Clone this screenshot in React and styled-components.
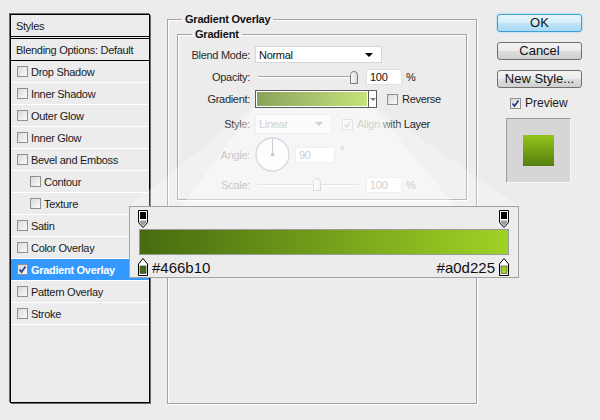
import styled, { createGlobalStyle } from "styled-components";

const GlobalStyle = createGlobalStyle`
  body {
    margin: 0;
    background: #ececec;
    font-family: "Liberation Sans", Arial, sans-serif;
  }
`;

const Page = styled.div`
  position: relative;
  width: 600px;
  height: 420px;
  box-sizing: border-box;
  padding: 12px 0 0 10px;
  display: flex;
  align-items: flex-start;
  overflow: hidden;
  font-size: 11px;
  letter-spacing: -0.3px;
  color: #1a1a1a;
`;

/* ---------- left list ---------- */

const StylesPanel = styled.div`
  margin-top: 2px;
  width: 140px;
  height: 389px;
  box-sizing: border-box;
  border: 1px solid #000;
  box-shadow: -1px -1px 0 #6a6a6a, 1px 1px 0 #6a6a6a;
`;

const PanelHeader = styled.div`
  height: 21px;
  padding-left: 5px;
  display: flex;
  align-items: center;
  border-bottom: 3px double #000;
`;

const PanelRow = styled.div`
  height: 21px;
  display: flex;
  align-items: center;
  gap: 3px;
  padding-left: ${(p) => (p.$plain ? 5 : p.$indent ? 19 : 6)}px;
  border-bottom: 1px solid ${(p) => (p.$plain ? "#000" : "#fff")};
  background: ${(p) => (p.$active ? "#3399ff" : "transparent")};
  color: ${(p) => (p.$active ? "#fff" : "#1a1a1a")};
  font-weight: ${(p) => (p.$active ? "bold" : "normal")};
`;

const CheckBox = styled.span`
  width: 11px;
  height: 11px;
  box-sizing: border-box;
  flex-shrink: 0;
  border: 1px solid ${(p) => (p.$disabled ? "#c8c8c8" : "#8e8f8f")};
  background: ${(p) =>
    p.$disabled ? "#f4f4f4" : "linear-gradient(135deg, #d8d8d8, #fbfbfb)"};
  display: flex;
  align-items: center;
  justify-content: center;
`;

const Check = ({ checked, disabled }) => (
  <CheckBox $disabled={disabled}>
    {checked && (
      <svg width="9" height="9" viewBox="0 0 9 9">
        <path
          d="M1.5 4.5 L3.5 7 L7.5 1.5"
          fill="none"
          stroke={disabled ? "#b9c0d8" : "#2a3c8c"}
          strokeWidth="1.7"
        />
      </svg>
    )}
  </CheckBox>
);

/* ---------- middle group boxes ---------- */

const GroupBox = styled.fieldset`
  margin: ${(p) => p.$margin};
  padding: ${(p) => p.$padding};
  width: ${(p) => p.$w}px;
  height: ${(p) => p.$h}px;
  box-sizing: border-box;
  min-width: 0;
  border: 1px solid #a3a3a3;
  box-shadow: inset 1px 1px 0 #fff, 1px 1px 0 #fff;
`;

const Legend = styled.legend`
  margin-left: ${(p) => p.$offset}px;
  padding: 0 3px;
  font-weight: bold;
  line-height: 14px;
  letter-spacing: -0.2px;
  color: #111;
`;

const FormRow = styled.div`
  display: flex;
  align-items: center;
  height: ${(p) => p.$h}px;
  margin-top: ${(p) => p.$mt}px;
`;

const Label = styled.span`
  width: 72px;
  margin-right: 5px;
  flex-shrink: 0;
  text-align: right;
  color: ${(p) => (p.$disabled ? "#8c8c8c" : "#2a2a2a")};
`;

const Select = styled.div`
  width: ${(p) => p.$w}px;
  height: 100%;
  box-sizing: border-box;
  padding: 0 8px 0 3px;
  display: flex;
  align-items: center;
  justify-content: space-between;
  background: ${(p) => (p.$disabled ? "#f7f7f7" : "#fff")};
  border: 1px solid ${(p) => (p.$disabled ? "#e2e2e2" : "#d6d6d6")};
  color: ${(p) => (p.$disabled ? "#a0a0a0" : "#111")};
  &::after {
    content: "";
    border-left: 4px solid transparent;
    border-right: 4px solid transparent;
    border-top: 4px solid ${(p) => (p.$disabled ? "#a0a0a0" : "#000")};
  }
`;

const Field = styled.div`
  width: ${(p) => p.$w}px;
  height: ${(p) => p.$h}px;
  margin-left: ${(p) => p.$ml}px;
  box-sizing: border-box;
  padding-left: 3px;
  display: flex;
  align-items: center;
  background: #fff;
  border: 1px solid #e2e2e2;
  color: ${(p) => (p.$disabled ? "#959595" : "#111")};
`;

const Unit = styled.span`
  margin-left: ${(p) => p.$ml}px;
  align-self: ${(p) => (p.$top ? "flex-start" : "center")};
  margin-top: ${(p) => (p.$top ? 6 : 0)}px;
  color: ${(p) => (p.$disabled ? "#959595" : "#222")};
`;

const SliderBox = styled.div`
  width: 100px;
  margin-left: 3px;
  display: flex;
  align-items: center;
`;

const TrackLine = styled.div`
  flex: ${(p) => p.$grow};
  height: 1px;
  border-bottom: 1px solid #fff;
  background: ${(p) => (p.$disabled ? "#c4c4c4" : "#a5a5a5")};
`;

const Slider = ({ value, disabled }) => (
  <SliderBox>
    <TrackLine $grow={value} $disabled={disabled} />
    <svg width="8" height="13" viewBox="0 0 8 13">
      <defs>
        <linearGradient id={disabled ? "thd" : "th"} x1="0" x2="1">
          <stop offset="0" stopColor="#fff" />
          <stop offset="1" stopColor={disabled ? "#e8e8e8" : "#d6d6d6"} />
        </linearGradient>
      </defs>
      <path
        d="M0.5 3.5 Q0.5 0.5 4 0.5 Q7.5 0.5 7.5 3.5 V12.5 H0.5 Z"
        fill={`url(#${disabled ? "thd" : "th"})`}
        stroke={disabled ? "#b4b4b4" : "#7a7a7a"}
      />
    </svg>
    <TrackLine $grow={1 - value} $disabled={disabled} />
  </SliderBox>
);

const GradientPicker = styled.div`
  width: 122px;
  height: 18px;
  box-sizing: border-box;
  display: flex;
  border: 1px solid #5d5d5d;
  background: #fff;
`;

const GradientFill = styled.div`
  flex: 1;
  margin: 1px;
  background: linear-gradient(to right, #8aa35c, #c6e27a);
`;

const GradientDrop = styled.div`
  width: 7px;
  border-left: 1px solid #5d5d5d;
  display: flex;
  align-items: center;
  justify-content: center;
  &::after {
    content: "";
    border-left: 3px solid transparent;
    border-right: 3px solid transparent;
    border-top: 3px solid #7a7a7a;
  }
`;

const InlineText = styled.span`
  margin-left: ${(p) => p.$ml}px;
  display: flex;
  align-items: center;
  gap: 4px;
  color: #1f1f1f;
`;

const Faded = styled.span`
  color: #a0a0a0;
`;

/* ---------- right column ---------- */

const ButtonColumn = styled.div`
  margin: 2px 0 0 20px;
  width: 85px;
  display: flex;
  flex-direction: column;
  gap: 10px;
`;

const Button = styled.button`
  width: 85px;
  height: 18px;
  padding: 0;
  font-family: "Liberation Sans", Arial, sans-serif;
  font-size: 13px;
  line-height: 16px;
  letter-spacing: 0;
  color: #111;
  border-radius: 3px;
  border: 1px solid ${(p) => (p.$primary ? "#3c9fd8" : "#707070")};
  box-shadow: ${(p) => (p.$primary ? "0 0 2px #6cc8f4" : "none")};
  background: ${(p) =>
    p.$primary
      ? "linear-gradient(#e8f6fd, #d5eefb 50%, #bfe5f8 51%, #a9daf3)"
      : "linear-gradient(#f3f3f3, #ebebeb 50%, #dddddd 51%, #cfcfcf)"};
`;

const PreviewToggle = styled.label`
  margin: -2px 0 0 13px;
  display: flex;
  align-items: center;
  gap: 4px;
  font-size: 12px;
  letter-spacing: 0;
`;

const PreviewBox = styled.div`
  margin: -2px 0 0 9px;
  width: 65px;
  height: 65px;
  box-sizing: border-box;
  border: 1px solid;
  border-color: #9a9a9a #f8f8f8 #f8f8f8 #9a9a9a;
  background: #d6d6d6;
  display: flex;
  align-items: center;
  justify-content: center;
`;

const PreviewSwatch = styled.div`
  width: 31px;
  height: 31px;
  background: linear-gradient(#94c41c, #557f0f);
`;

/* ---------- overlay: light fan + gradient editor ---------- */

const Fan = styled.svg`
  position: absolute;
  left: 0;
  top: 0;
  pointer-events: none;
`;

const Editor = styled.div`
  position: absolute;
  left: 129px;
  top: 206px;
  width: 390px;
  height: 72px;
  box-sizing: border-box;
  padding: 3px 9px 0 8px;
  display: flex;
  flex-direction: column;
  border: 1px solid #a3a3a3;
  background: #ececec;
  letter-spacing: 0;
`;

const StopRow = styled.div`
  height: ${(p) => p.$h}px;
  margin-top: ${(p) => p.$mt}px;
  display: flex;
  align-items: center;
  justify-content: space-between;
`;

const GradientBar = styled.div`
  margin: 1px 0 0 1px;
  height: 26px;
  box-sizing: border-box;
  border: 1px solid #9a9a9a;
  background: linear-gradient(to right, #466b10, #a0d225);
`;

const HexLabel = styled.span`
  flex: 1;
  margin: 0 4px;
  font-size: 15px;
  color: #111;
  text-align: ${(p) => p.$align};
`;

const TopStop = () => (
  <svg width="10" height="18" viewBox="0 0 10 18">
    <path d="M0.5 0.5 H9.5 V12.5 L5 17.5 L0.5 12.5 Z" fill="#fff" stroke="#000" />
    <path d="M1.5 10.5 H8.5 V12.2 L5 16 L1.5 12.2 Z" fill="#9d9d9d" />
    <rect x="2" y="2" width="6" height="7" fill="#000" />
  </svg>
);

const BottomStop = ({ color }) => (
  <svg width="10" height="18" viewBox="0 0 10 18">
    <path d="M5 0.5 L9.5 6 V17.5 H0.5 V6 Z" fill="#fff" stroke="#000" />
    <rect x="2" y="8" width="6" height="7.5" fill={color} stroke="#333" strokeWidth="0.6" />
  </svg>
);

const effects = [
  { name: "Drop Shadow" },
  { name: "Inner Shadow" },
  { name: "Outer Glow" },
  { name: "Inner Glow" },
  { name: "Bevel and Emboss" },
  { name: "Contour", indent: true },
  { name: "Texture", indent: true },
  { name: "Satin" },
  { name: "Color Overlay" },
  { name: "Gradient Overlay", active: true },
  { name: "Pattern Overlay" },
  { name: "Stroke" },
];

const App = () => {
  return (
    <Page>
      <GlobalStyle />

      <StylesPanel>
        <PanelHeader>Styles</PanelHeader>
        <PanelRow $plain>Blending Options: Default</PanelRow>
        {effects.map((e) => (
          <PanelRow key={e.name} $indent={e.indent} $active={e.active}>
            <Check checked={e.active} />
            {e.name}
          </PanelRow>
        ))}
      </StylesPanel>

      <GroupBox $margin="0 0 0 17px" $padding="0 9px" $w={310} $h={392}>
        <Legend $offset={5}>Gradient Overlay</Legend>
        <GroupBox $margin="1px 0 0 0" $padding="0" $w={290} $h={173}>
          <Legend $offset={14}>Gradient</Legend>

          <FormRow $h={17} $mt={5}>
            <Label>Blend Mode:</Label>
            <Select $w={127}>Normal</Select>
          </FormRow>

          <FormRow $h={16} $mt={6}>
            <Label>Opacity:</Label>
            <Slider value={1} />
            <Field $w={36} $h={16} $ml={8}>100</Field>
            <Unit $ml={4}>%</Unit>
          </FormRow>

          <FormRow $h={18} $mt={5}>
            <Label>Gradient:</Label>
            <GradientPicker>
              <GradientFill />
              <GradientDrop />
            </GradientPicker>
            <InlineText $ml={10}>
              <Check />
              Reverse
            </InlineText>
          </FormRow>

          <FormRow $h={20} $mt={6}>
            <Label>Style:</Label>
            <Select $w={77} $disabled>
              Linear
            </Select>
            <InlineText $ml={10}>
              <Check checked disabled />
              <span>
                <Faded>Align</Faded> with Layer
              </span>
            </InlineText>
          </FormRow>

          <FormRow $h={34} $mt={4}>
            <Label $disabled>Angle:</Label>
            <svg width="36" height="36" viewBox="0 0 36 36">
              <circle cx="17.5" cy="17.5" r="16.5" fill="#fbfbfb" stroke="#a9b0ca" strokeWidth="1.3" />
              <line x1="17.5" y1="1.5" x2="17.5" y2="17.5" stroke="#949494" />
              <rect x="16" y="16" width="3" height="3" fill="#949494" />
            </svg>
            <Field $w={40} $h={16} $ml={4} $disabled>
              90
            </Field>
            <Unit $ml={5} $top $disabled>
              °
            </Unit>
          </FormRow>

          <FormRow $h={15} $mt={5}>
            <Label $disabled>Scale:</Label>
            <Slider value={0.6} disabled />
            <Field $w={36} $h={16} $ml={8} $disabled>
              100
            </Field>
            <Unit $ml={4} $disabled>
              %
            </Unit>
          </FormRow>
        </GroupBox>
      </GroupBox>

      <ButtonColumn>
        <Button $primary>OK</Button>
        <Button>Cancel</Button>
        <Button>New Style...</Button>
        <PreviewToggle>
          <Check checked />
          Preview
        </PreviewToggle>
        <PreviewBox>
          <PreviewSwatch />
        </PreviewBox>
      </ButtonColumn>

      <Fan width="600" height="420" viewBox="0 0 600 420">
        <polygon points="252,108 377,108 519,206 129,206" fill="#fff" opacity="0.25" />
        <polygon points="254,108 374,108 455,206 182,206" fill="#fff" opacity="0.35" />
      </Fan>

      <Editor>
        <StopRow $h={18} $mt={0}>
          <TopStop />
          <TopStop />
        </StopRow>
        <GradientBar />
        <StopRow $h={18} $mt={3}>
          <BottomStop color="#466b10" />
          <HexLabel $align="left">#466b10</HexLabel>
          <HexLabel $align="right">#a0d225</HexLabel>
          <BottomStop color="#a0d225" />
        </StopRow>
      </Editor>
    </Page>
  );
};

export default App;
